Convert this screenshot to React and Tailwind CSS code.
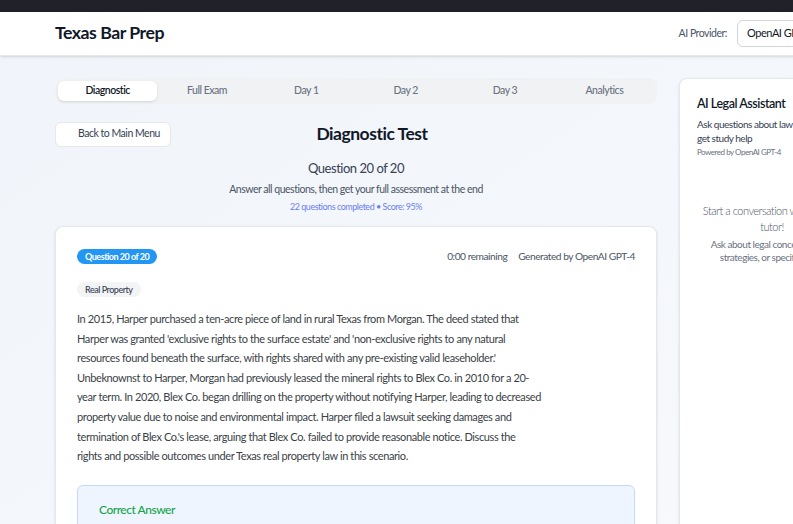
import React from 'react';

const tabs = ['Diagnostic', 'Full Exam', 'Day 1', 'Day 2', 'Day 3', 'Analytics'];

// line breaks kept as in the source layout
const questionLines = [
  'In 2015, Harper purchased a ten-acre piece of land in rural Texas from Morgan. The deed stated that',
  "Harper was granted 'exclusive rights to the surface estate' and 'non-exclusive rights to any natural",
  "resources found beneath the surface, with rights shared with any pre-existing valid leaseholder.'",
  'Unbeknownst to Harper, Morgan had previously leased the mineral rights to Blex Co. in 2010 for a 20-',
  'year term. In 2020, Blex Co. began drilling on the property without notifying Harper, leading to decreased',
  'property value due to noise and environmental impact. Harper filed a lawsuit seeking damages and',
  "termination of Blex Co.'s lease, arguing that Blex Co. failed to provide reasonable notice. Discuss the",
  'rights and possible outcomes under Texas real property law in this scenario.',
];

const Header = () => (
  <header className="bg-white border-b border-gray-200 shadow-sm h-[44px]">
    <div className="px-[55px] h-full flex items-center justify-between">
      <div className="text-[17.7px] font-bold text-gray-900">Texas Bar Prep</div>
      <div className="flex items-center gap-[10px]">
        <span className="text-[10.5px] text-gray-600">AI Provider:</span>
        <div className="h-[27px] w-[128px] border border-gray-300 rounded-md bg-white px-[9px] flex items-center text-[11px] text-gray-900">
          OpenAI GPT-4
        </div>
      </div>
    </div>
  </header>
);

const Tabs = () => (
  <div className="bg-[#f1f2f4] rounded-lg p-[3px] grid grid-cols-6 h-[26px]">
    {tabs.map((t, i) => (
      <div
        key={t}
        className={
          i === 0
            ? 'bg-white rounded-md shadow-sm flex items-center justify-center text-[10.5px] font-semibold text-gray-900'
            : 'flex items-center justify-center text-[10.5px] font-medium text-gray-500'
        }
      >
        {t}
      </div>
    ))}
  </div>
);

const QuestionCard = () => (
  <div className="mt-[13px] bg-white border border-gray-200 rounded-lg px-[21px] pt-[22px] pb-[40px] shadow-sm">
    <div className="flex items-center justify-between h-[15px]">
      <span className="bg-[#2196f3] text-white text-[9px] font-bold rounded-full px-[8px] h-[15px] flex items-center">
        Question 20 of 20
      </span>
      <div className="flex items-center gap-[11px] text-[10.2px] text-gray-600">
        <span>0:00 remaining</span>
        <span>Generated by OpenAI GPT-4</span>
      </div>
    </div>
    <div className="mt-[18px] flex">
      <span className="flex items-center h-[15px] px-[8px] rounded-full bg-gray-100 text-[9px] font-medium text-gray-700">
        Real Property
      </span>
    </div>
    <p className="mt-[12px] text-[11px] tracking-[-0.4px] leading-[19.6px] text-[#3a3f47]">
      {questionLines.map((l, i) => (
        <span key={i} className="block whitespace-nowrap">
          {l}
        </span>
      ))}
    </p>
    <div className="mt-[19px] bg-[#eef5ff] border border-[#bfdbfe] rounded-md px-[21px] pt-[15px] pb-[40px]">
      <div className="text-[12px] font-medium text-[#16a34a]">Correct Answer</div>
      <p className="mt-[8px] text-[11px] text-gray-700">
        Harper holds the surface estate, while Blex Co.'s prior recorded mineral lease remains valid.
      </p>
    </div>
  </div>
);

const Sidebar = () => (
  <aside className="w-[186px] shrink-0 bg-white border border-gray-200 rounded-lg shadow-sm h-[520px]">
    <div className="px-[17px] pt-[16px]">
      <h2 className="text-[12.5px] font-semibold text-gray-900">AI Legal Assistant</h2>
      <p className="mt-[3px] max-w-[125px] text-[10px] leading-[14px] text-gray-700">
        Ask questions about law and get study help
      </p>
      <p className="mt-[1px] text-[8px] text-gray-500">Powered by OpenAI GPT-4</p>
    </div>
    <div className="px-[16px] mt-[45px] text-center">
      <p className="text-[11px] font-light leading-[16px] text-gray-600">Start a conversation with your AI tutor!</p>
      <p className="mt-[3px] px-[4px] text-[10px] leading-[13px] text-gray-500">
        Ask about legal concepts, exam strategies, or specific cases
      </p>
    </div>
  </aside>
);

export default function App() {
  return (
    <div className="h-screen w-full overflow-hidden bg-gradient-to-br from-[#f0f4fa] to-[#f7f9fc]">
      <div className="w-[920px] tracking-[-0.03em]" style={{ fontFamily: 'Lato, "Noto Sans", sans-serif' }}>
        <div className="h-[12px] bg-[#202129]" />
        <Header />
        <div className="px-[55px] pt-[22px] flex gap-[22px]">
          <main className="w-[602px] shrink-0">
            <Tabs />
            <div className="mt-[17px] flex items-center">
              <button className="h-[25px] w-[116px] bg-white border border-gray-200 rounded-md text-[10.5px] text-gray-700 text-left pl-[22px]">
                Back to Main Menu
              </button>
              <h1 className="flex-1 text-center text-[17.5px] font-bold text-gray-900">Diagnostic Test</h1>
              <div className="w-[84px]" />
            </div>
            <div className="text-center">
              <div className="mt-[12px] text-[13px] text-gray-700">Question 20 of 20</div>
              <div className="mt-[3px] text-[10.5px] text-gray-600">
                Answer all questions, then get your full assessment at the end
              </div>
              <div className="mt-[2px] text-[9px] text-[#6b7ff0]">22 questions completed • Score: 95%</div>
            </div>
            <QuestionCard />
          </main>
          <Sidebar />
        </div>
      </div>
    </div>
  );
}
